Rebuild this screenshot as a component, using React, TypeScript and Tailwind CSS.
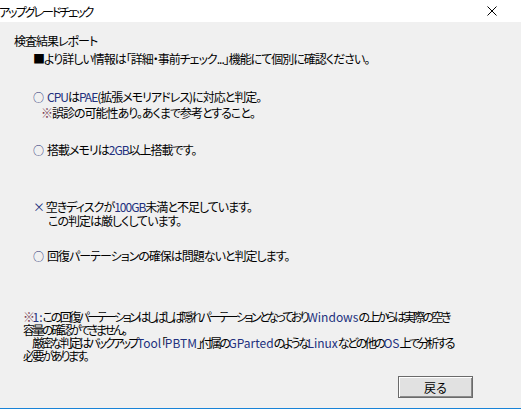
import React from "react";

const L = ({ children }: { children: React.ReactNode }) => (
  <span className="text-[#22307e]">{children}</span>
);
const FL = ({ children }: { children: React.ReactNode }) => (
  <span className="text-[#22307e] tracking-[0px]">{children}</span>
);

const O = () => <span className="text-[#1a2870] text-[11px] mr-[4px]">○</span>;
const K = () => <span className="text-[#7a3e52]">※</span>;

export default function App() {
  return (
    <div className="w-[521px] h-[409px] overflow-hidden bg-white text-[12px] leading-[13px] tracking-[-1px] text-black font-['Noto_Sans_CJK_JP',sans-serif] [font-feature-settings:'palt']">
      {/* title bar */}
      <div className="h-[22px] bg-white flex items-center justify-between">
        <div className="-ml-[1px] whitespace-nowrap tracking-[-2px]">アップグレードチェック</div>
        <svg width="10" height="10" viewBox="0 0 10 10" className="mr-[24px]">
          <path d="M0.5 0.5 L9.5 9.5 M9.5 0.5 L0.5 9.5" stroke="#000" strokeWidth="1" />
        </svg>
      </div>
      {/* body */}
      <div className="h-[386px] bg-[#f0f0f0] flex flex-col pt-[12px] whitespace-nowrap">
        <div className="pl-[14px]">検査結果レポート</div>
        <div className="pl-[33px] mt-[5px]">■より詳しい情報は「詳細・事前チェック...」機能にて個別に確認ください。</div>

        <div className="pl-[33px] mt-[25px]">
          <O /><L>CPU</L>は<L>PAE</L>(拡張メモリアドレス)に対応と判定。
        </div>
        <div className="pl-[41px] mt-[2px]">
          <K />誤診の可能性あり。あくまで参考とすること。
        </div>

        <div className="pl-[33px] mt-[24px]">
          <O />搭載メモリは<L>2GB</L>以上搭載です。
        </div>

        <div className="pl-[33px] mt-[43px]">
          <L>×</L> 空きディスクが<L>100GB</L>未満と不足しています。
        </div>
        <div className="pl-[48px] mt-[1px]">この判定は厳しくしています。</div>

        <div className="pl-[33px] mt-[22px]">
          <O />回復パーテーションの確保は問題ないと判定します。
        </div>

        <div className="pl-[23px] mt-[47px] flex flex-col tracking-[-2.5px]">
          <div>
            <K />
            <FL>1:</FL> この回復パーテーションはしばしば隠れパーテーションとなっており<FL>Windows</FL>の上からは実際の空き
          </div>
          <div>容量の確認ができません。</div>
          <div className="pl-[9px]">
            厳密な判定はバックアップ<FL>Tool</FL>「<FL>PBTM</FL>」付属の<FL>GParted</FL>のような<FL>Linux</FL>などの他の<FL>OS</FL>上で分析する
          </div>
          <div>必要があります。</div>
        </div>

        <div className="flex justify-end mt-[14px] pr-[48px]">
          <button className="w-[75px] h-[22px] bg-[#e1e1e1] border border-[#6a6a6a] shadow-[inset_1px_1px_0_#ffffff,inset_-1px_-1px_0_#8a8a8a] flex items-center justify-center leading-[13px] tracking-normal">
            戻る
          </button>
        </div>
      </div>
      <div className="h-[1px] bg-[#1883d7]" />
    </div>
  );
}
